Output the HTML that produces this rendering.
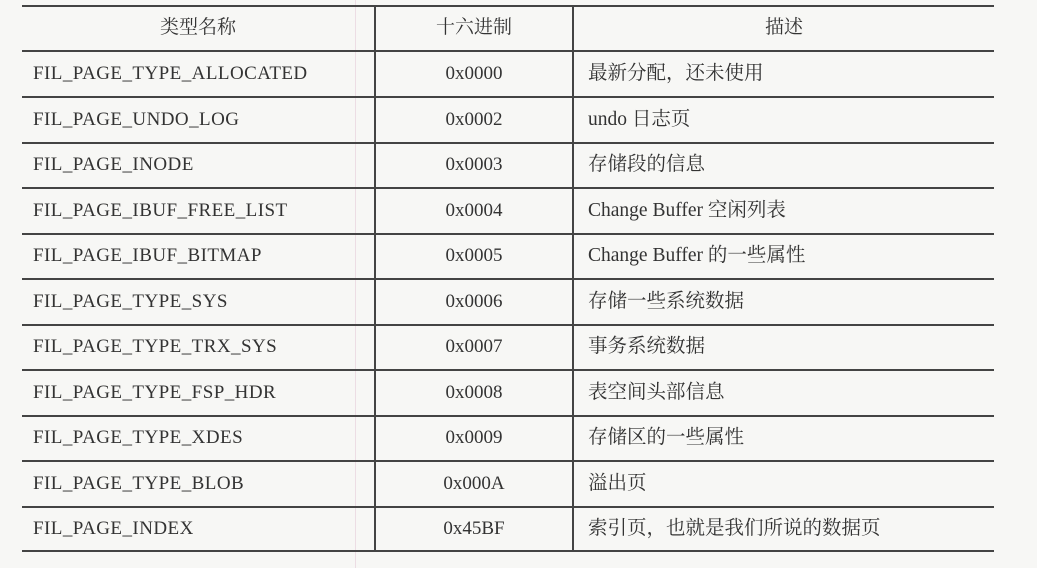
<!DOCTYPE html>
<html><head><meta charset="utf-8"><style>
body{margin:0;width:1037px;height:568px;background:#f7f7f5;position:relative;overflow:hidden;font-family:"Liberation Serif","Noto Serif CJK SC",serif;color:#333}
.h{position:absolute;left:22px;width:972px;height:2px;background:#444}
.v{position:absolute;top:6px;height:546px;width:2px;background:#444}
.t{position:absolute;font-size:19px;line-height:22px;white-space:nowrap}
.c1{left:33px;letter-spacing:0.45px}.c2{left:376px;width:196px;text-align:center}.c3{left:588px;font-size:19.5px}
</style></head><body>
<div style="position:absolute;left:355px;top:0;width:1px;height:568px;background:#ecdde4"></div>
<div class="h" style="top:5px;height:2px"></div>
<div class="h" style="top:50px"></div>
<div class="h" style="top:96px"></div>
<div class="h" style="top:142px"></div>
<div class="h" style="top:187px"></div>
<div class="h" style="top:233px"></div>
<div class="h" style="top:278px"></div>
<div class="h" style="top:324px"></div>
<div class="h" style="top:369px"></div>
<div class="h" style="top:415px"></div>
<div class="h" style="top:460px"></div>
<div class="h" style="top:506px"></div>
<div class="h" style="top:550px"></div>
<div class="v" style="left:374px"></div>
<div class="v" style="left:572px"></div>
<div class="t" style="left:22px;width:352px;text-align:center;top:17px">类型名称</div>
<div class="t c2" style="top:17px">十六进制</div>
<div class="t" style="left:574px;width:420px;text-align:center;top:17px">描述</div>

<div class="t c1" style="top:63px">FIL_PAGE_TYPE_ALLOCATED</div><div class="t c2" style="top:63px">0x0000</div><div class="t c3" style="top:63px">最新分配，还未使用</div>
<div class="t c1" style="top:109px">FIL_PAGE_UNDO_LOG</div><div class="t c2" style="top:109px">0x0002</div><div class="t c3" style="top:109px">undo 日志页</div>
<div class="t c1" style="top:154px">FIL_PAGE_INODE</div><div class="t c2" style="top:154px">0x0003</div><div class="t c3" style="top:154px">存储段的信息</div>
<div class="t c1" style="top:200px">FIL_PAGE_IBUF_FREE_LIST</div><div class="t c2" style="top:200px">0x0004</div><div class="t c3" style="top:200px">Change Buffer 空闲列表</div>
<div class="t c1" style="top:245px">FIL_PAGE_IBUF_BITMAP</div><div class="t c2" style="top:245px">0x0005</div><div class="t c3" style="top:245px">Change Buffer 的一些属性</div>
<div class="t c1" style="top:291px">FIL_PAGE_TYPE_SYS</div><div class="t c2" style="top:291px">0x0006</div><div class="t c3" style="top:291px">存储一些系统数据</div>
<div class="t c1" style="top:336px">FIL_PAGE_TYPE_TRX_SYS</div><div class="t c2" style="top:336px">0x0007</div><div class="t c3" style="top:336px">事务系统数据</div>
<div class="t c1" style="top:382px">FIL_PAGE_TYPE_FSP_HDR</div><div class="t c2" style="top:382px">0x0008</div><div class="t c3" style="top:382px">表空间头部信息</div>
<div class="t c1" style="top:427px">FIL_PAGE_TYPE_XDES</div><div class="t c2" style="top:427px">0x0009</div><div class="t c3" style="top:427px">存储区的一些属性</div>
<div class="t c1" style="top:473px">FIL_PAGE_TYPE_BLOB</div><div class="t c2" style="top:473px">0x000A</div><div class="t c3" style="top:473px">溢出页</div>
<div class="t c1" style="top:518px">FIL_PAGE_INDEX</div><div class="t c2" style="top:518px">0x45BF</div><div class="t c3" style="top:518px">索引页，也就是我们所说的数据页</div>
</body></html>
